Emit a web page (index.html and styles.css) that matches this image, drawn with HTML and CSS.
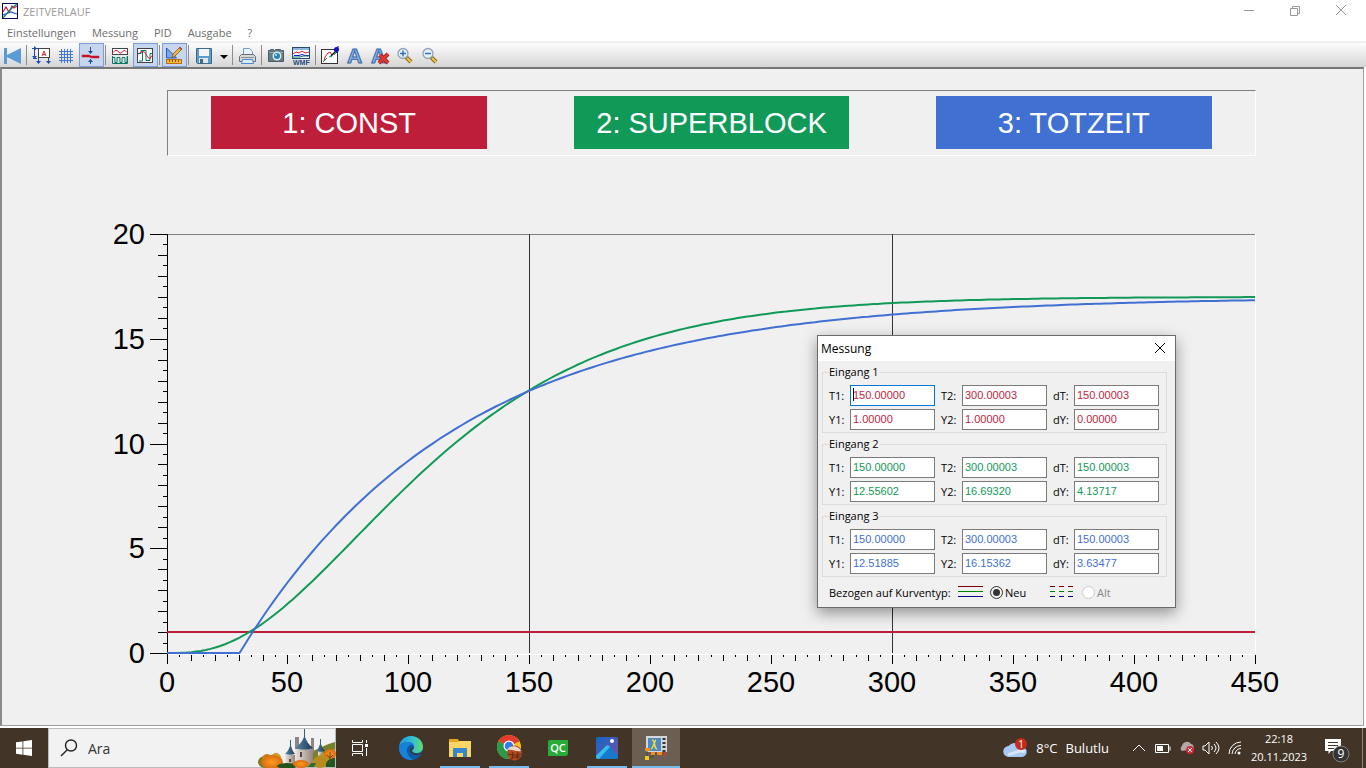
FILE: index.html
```html
<!DOCTYPE html>
<html lang="de">

<head>
    <meta charset="UTF-8">
    <meta name="viewport" content="width=device-width, initial-scale=1.0">
    <title>ZEITVERLAUF</title>
    <link rel="stylesheet" href="styles.css">
</head>

<body>
    <header class="titlebar">
        <svg class="app-icon" width="16" height="16" viewBox="0 0 16 16">
            <rect x="0.5" y="0.5" width="15" height="15" fill="#fff" stroke="#0a0a50"/>
            <path d="M1 9l3-5 3 5 3-6 2 2 3-2" fill="none" stroke="#d81838" stroke-width="1.2"/>
            <path d="M1 12l5-2 3-1 3 1 3 1" fill="none" stroke="#2848c8" stroke-width="1.2"/>
            <path d="M1 15l6-7 4-4 4-3" fill="none" stroke="#108878" stroke-width="1.2"/>
        </svg>
        <h1>ZEITVERLAUF</h1>
        <div class="window-buttons">
            <button aria-label="Minimieren"><svg width="12" height="12"><path d="M1 5.5h10"/></svg></button>
            <button aria-label="Wiederherstellen"><svg width="12" height="12"><path d="M1.5 3.5h7v7h-7zM3.5 3.5v-2h7v7h-2"/></svg></button>
            <button aria-label="Schließen"><svg width="12" height="12"><path d="M1 0l10 10M11 0L1 10"/></svg></button>
        </div>
    </header>

    <nav class="menu">
        <a href="#">Einstellungen</a>
        <a href="#">Messung</a>
        <a href="#">PID</a>
        <a href="#">Ausgabe</a>
        <a href="#">?</a>
    </nav>

    <div class="toolbar">
        <button aria-label="Anfang">
            <svg viewBox="0 0 25 24"><path d="M4 5h3v7l14-7v16L7 14v7H4z" fill="#5a9bd5"/></svg>
        </button>
        <span class="sep"></span>
        <button aria-label="Achsen">
            <svg viewBox="0 0 25 24" fill="none">
                <rect x="9.5" y="5.5" width="11" height="9" fill="#fff" stroke="#444"/>
                <path d="M13 13l2-5 2 5M13.5 11.500h3" stroke="#d83028"/>
                <path d="M3 5.500h6M4 15.500h4M9.500 15v5M19.500 15v5M5.500 7v7" stroke="#1c4faa"/>
                <path d="M5 3l3 2.500-3 2.500zM3 13h5l-2.500 3zM7 18h5l-2.500 3zM17 18h5l-2.500 3z" fill="#1c4faa"/>
            </svg>
        </button>
        <button aria-label="Gitter">
            <svg viewBox="0 0 25 24"><path d="M7.500 6v14M10.500 6v14M13.500 6v14M16.500 6v14M5 8.500h14M5 11.500h14M5 14.500h14M5 17.500h14" stroke="#4478c8"/></svg>
        </button>
        <button class="active" aria-label="Messlinie">
            <svg viewBox="0 0 25 24">
                <path d="M3 12h7l2 1h8v2h-7l-3-1H3z" fill="#c81028" stroke="#c81028" stroke-width="0.5"/>
                <path d="M11.500 4v6M11.500 16v5" stroke="#1c4faa"/>
                <path d="M9 8h5l-2.500 3zM9 19h5l-2.500-3z" fill="#1c4faa"/>
            </svg>
        </button>
        <span class="sep"></span>
        <button aria-label="Getrennt">
            <svg viewBox="0 0 25 24" fill="none">
                <rect x="4.500" y="5.500" width="15" height="6" fill="#fff" stroke="#444"/>
                <path d="M5 9.500l2-2h2l3 2.500h1l3-2.500h1l2 2" stroke="#d81838"/>
                <path d="M4 14.500h3v5h2v-5h3v5h2v-5h3v5h2v-6" stroke="#087868" fill="#fff"/>
                <path d="M4.500 13v7.500h15V13" stroke="#087868"/>
            </svg>
        </button>
        <button class="active" aria-label="Gemeinsam">
            <svg viewBox="0 0 25 24" fill="none">
                <rect x="4.500" y="5.500" width="15" height="14" fill="#fff" stroke="#444"/>
                <path d="M5 10.500h3v-3h5v10h4v-7h2" stroke="#087868"/>
                <path d="M9.500 8v10H6" stroke="#087868"/>
                <path d="M5 11.500l2-2 3-1 2 1 3 5 2 1 2-3" stroke="#d81838"/>
            </svg>
        </button>
        <span class="sep"></span>
        <button class="active" aria-label="Zeichnen">
            <svg viewBox="0 0 25 24">
                <path d="M4.500 5v10h10z" fill="#78a8e8" stroke="#2858b0"/>
                <path d="M10 15l1-4 7-7 2 2-7 7z" fill="#f0b840" stroke="#805020" stroke-width="0.8"/>
                <path d="M17 5l2 2 1-1-2-2z" fill="#b04040"/>
                <rect x="4.500" y="16.500" width="15" height="4" fill="#f8b838" stroke="#b87010"/>
                <path d="M7.500 17v2M10.500 17v2M13.500 17v2M16.500 17v2" stroke="#805020"/>
            </svg>
        </button>
        <span class="sep"></span>
        <button aria-label="Speichern">
            <svg viewBox="0 0 25 24">
                <path d="M5.500 5.500h15v15h-14l-1-1z" fill="#5a9bd0" stroke="#3c6c8c"/>
                <path d="M8 6h10v7H8z" fill="#f4f4f4"/>
                <path d="M8 15h9v5H8z" fill="#e4e4e4"/>
                <path d="M9 16h3v4H9z" fill="#3c6c8c"/>
            </svg>
        </button>
        <button class="narrow" aria-label="Speicheroptionen">
            <svg viewBox="0 0 15 24"><path d="M4 12h8l-4 4z" fill="#000"/></svg>
        </button>
        <span class="sep"></span>
        <button aria-label="Drucken">
            <svg viewBox="0 0 25 24">
                <path d="M8.500 12V5.500h6l3 3V12" fill="#eaf3fc" stroke="#6f9fd0"/>
                <path d="M6.500 11.500h12l2 2v5h-16v-5z" fill="#d4d8dd" stroke="#666c78"/>
                <path d="M6 14.500h13" stroke="#8a919c"/>
                <path d="M7.500 16.500h10l1 4h-12z" fill="#d8ecfc" stroke="#5088c8"/>
            </svg>
        </button>
        <span class="sep"></span>
        <button aria-label="Kamera">
            <svg viewBox="0 0 25 24">
                <path d="M4.500 7.500h2v-1h3v1h1l1-1h5l1 1h2v11h-15z" fill="#647c84" stroke="#4b5e66"/>
                <path d="M5 9.500h14" stroke="#93a8ae"/>
                <circle cx="13" cy="13" r="4.500" fill="#dce8ee"/>
                <circle cx="13" cy="13" r="3" fill="#2884b0"/>
                <circle cx="12" cy="12" r="1" fill="#b8e8ff"/>
            </svg>
        </button>
        <button aria-label="WMF">
            <svg viewBox="0 0 25 24" fill="none">
                <rect x="3.500" y="4.500" width="17" height="11" fill="#fff" stroke="#284878"/>
                <path d="M4 6h16" stroke="#8fb5df" stroke-width="2"/>
                <path d="M4 11l3-2 3 1 3-2 3 2 4-1" stroke="#d81838"/>
                <path d="M5 12.500h5l3-1 3 1h4" stroke="#1818c8"/>
                <path d="M4 14h7l3-1h6" stroke="#087868"/>
                <text x="4" y="22" class="wmf">WMF</text>
            </svg>
        </button>
        <span class="sep"></span>
        <button aria-label="Kurve bearbeiten">
            <svg viewBox="0 0 25 24" fill="none">
                <rect x="3.500" y="6.500" width="16" height="14" fill="#fff" stroke="#333"/>
                <path d="M6 18l1-4 3-4 2-1 2 3" stroke="#d81838"/>
                <path d="M5 19l4-4M11 14l3-1M16 12l2-2" stroke="#109858"/>
                <path d="M13 13l5-5" stroke="#111" stroke-width="1.5"/>
                <circle cx="18.500" cy="6.500" r="2.500" fill="#1010c0"/>
                <path d="M15 6l4 4M19 4h2" stroke="#1010c0"/>
            </svg>
        </button>
        <button aria-label="Text">
            <svg viewBox="0 0 25 24"><text x="4" y="20" class="letter">A</text></svg>
        </button>
        <button aria-label="Text löschen">
            <svg viewBox="0 0 25 24">
                <text x="3" y="20" class="letter">A</text>
                <path d="M12 12l8 8M20 11l-9 9" stroke="#a01818" stroke-width="4"/>
                <path d="M12 12l8 8M20 11l-9 9" stroke="#e03830" stroke-width="2.5"/>
            </svg>
        </button>
        <button aria-label="Vergrößern">
            <svg viewBox="0 0 25 24">
                <path d="M13 14l5 5" stroke="#8a6818" stroke-width="4"/>
                <path d="M14 15l4 4" stroke="#f0c850" stroke-width="2"/>
                <circle cx="10" cy="10.500" r="5" fill="#e4effa" stroke="#94a2b4" stroke-width="1.3"/>
                <path d="M7 10.500h6M10 7.500v6" stroke="#3870c0" stroke-width="1.5"/>
            </svg>
        </button>
        <button aria-label="Verkleinern">
            <svg viewBox="0 0 25 24">
                <path d="M13 14l5 5" stroke="#8a6818" stroke-width="4"/>
                <path d="M14 15l4 4" stroke="#f0c850" stroke-width="2"/>
                <circle cx="10" cy="10.500" r="5" fill="#e4effa" stroke="#94a2b4" stroke-width="1.3"/>
                <path d="M7 10.500h6" stroke="#3870c0" stroke-width="1.5"/>
            </svg>
        </button>
    </div>

    <main class="workspace">
        <div class="legend-box">
            <div class="signal"><span class="red">1: CONST</span></div>
            <div class="signal"><span class="green">2: SUPERBLOCK</span></div>
            <div class="signal"><span class="blue">3: TOTZEIT</span></div>
        </div>
        <div class="chart-box">
            <svg id="chart" width="100%" height="100%"></svg>
        </div>

        <section class="dialog" aria-label="Messung">
            <div class="dialog-title">
                <h2>Messung</h2>
                <button aria-label="Schließen"><svg width="12" height="12"><path d="M1 1l10 10M11 1L1 11"/></svg></button>
            </div>
            <form class="dialog-body">
                <fieldset class="input-red">
                    <legend>Eingang 1</legend>
                    <div class="values">
                        <label>T1: <span class="focused"><input type="text" value="150.00000"></span></label>
                        <label>T2: <span><input type="text" value="300.00003"></span></label>
                        <label>dT: <span><input type="text" value="150.00003"></span></label>
                        <label>Y1: <span><input type="text" value="1.00000"></span></label>
                        <label>Y2: <span><input type="text" value="1.00000"></span></label>
                        <label>dY: <span><input type="text" value="0.00000"></span></label>
                    </div>
                </fieldset>
                <fieldset class="input-green">
                    <legend>Eingang 2</legend>
                    <div class="values">
                        <label>T1: <span><input type="text" value="150.00000"></span></label>
                        <label>T2: <span><input type="text" value="300.00003"></span></label>
                        <label>dT: <span><input type="text" value="150.00003"></span></label>
                        <label>Y1: <span><input type="text" value="12.55602"></span></label>
                        <label>Y2: <span><input type="text" value="16.69320"></span></label>
                        <label>dY: <span><input type="text" value="4.13717"></span></label>
                    </div>
                </fieldset>
                <fieldset class="input-blue">
                    <legend>Eingang 3</legend>
                    <div class="values">
                        <label>T1: <span><input type="text" value="150.00000"></span></label>
                        <label>T2: <span><input type="text" value="300.00003"></span></label>
                        <label>dT: <span><input type="text" value="150.00003"></span></label>
                        <label>Y1: <span><input type="text" value="12.51885"></span></label>
                        <label>Y2: <span><input type="text" value="16.15362"></span></label>
                        <label>dY: <span><input type="text" value="3.63477"></span></label>
                    </div>
                </fieldset>
                <div class="curve-type">
                    <span class="curve-caption">Bezogen auf Kurventyp:</span>
                    <label>
                        <svg class="lines" width="25" height="12"><path d="M0 .5h25" stroke="#800000"/><path d="M0 5.500h25" stroke="#008000"/><path d="M0 10.500h25" stroke="#000080"/></svg>
                        <input type="radio" name="typ" checked>Neu
                    </label>
                    <label class="disabled">
                        <svg class="lines" width="25" height="12" stroke-dasharray="5 4"><path d="M0 .5h23" stroke="#800000"/><path d="M0 5.500h23" stroke="#008000"/><path d="M0 10.500h23" stroke="#000080"/></svg>
                        <input type="radio" name="typ" disabled>Alt
                    </label>
                </div>
            </form>
        </section>
    </main>

    <footer class="taskbar">
        <button class="task" aria-label="Start">
            <svg width="16" height="16"><path d="M0 2.300L6.500 1.400v6.300H0zM7.300 1.200L16 0v7.700H7.300zM0 8.500h6.500v6.200L0 13.800zM7.300 8.500H16V16l-8.700-1.200z" fill="#fff"/></svg>
        </button>
        <div class="search">
            <svg width="18" height="18" fill="none" stroke="#222" stroke-width="1.4"><circle cx="10" cy="6.500" r="5.500"/><path d="M6 11l-6 6"/></svg>
            <input type="text" placeholder="Ara" aria-label="Ara">
            <svg class="castle" width="77" height="38" viewBox="0 0 77 38">
                <defs>
                    <linearGradient id="roof"><stop offset="0" stop-color="#5a87a5"/><stop offset="1" stop-color="#183a58"/></linearGradient>
                    <linearGradient id="wall"><stop offset="0" stop-color="#eee5e0"/><stop offset="1" stop-color="#96837e"/></linearGradient>
                    <radialGradient id="tree"><stop offset="0" stop-color="#ff9a1e"/><stop offset="1" stop-color="#d86c10"/></radialGradient>
                </defs>
                <path d="M38 38c2-10 10-14 17-16 6-2 13-7 22-9v25z" fill="#75822a"/>
                <path d="M37 8h4v20h-4zM53 9h3v15h-3z" fill="#8d8582"/>
                <path d="M37 20h18v17H37z" fill="url(#wall)"/>
                <path d="M27 26h10v10H27z" fill="url(#wall)"/>
                <path d="M60 22h5v6h-5z" fill="url(#wall)"/>
                <path d="M46 0h1v8c2 5 4 8 8 11-5 2-14 2-18 0 4-3 7-6 9-11z" fill="url(#roof)"/>
                <path d="M32 11h1v6c1 3 2 6 4 8-3 1-7 1-10 0 3-3 4-5 5-8z" fill="url(#roof)"/>
                <path d="M62 10h1v5c1 3 2 5 4 7-3 1-6 1-9 0 2-2 3-4 4-7z" fill="url(#roof)"/>
                <path d="M42 23h2v5h-2zM31 30h2v3h-2z" fill="#56443d"/>
                <path d="M52 38c2-9 10-14 25-18v18z" fill="#b09a28"/>
                <ellipse cx="7" cy="33" rx="7" ry="6" fill="#7c7b22"/>
                <circle cx="9" cy="30" r="5" fill="#c58222"/><circle cx="18" cy="29" r="5" fill="#d59c22"/>
                <ellipse cx="14" cy="33" rx="11" ry="7" fill="url(#tree)"/>
                <ellipse cx="29" cy="37" rx="10" ry="3" fill="#24541c"/>
                <ellipse cx="43" cy="35" rx="8" ry="4" fill="url(#tree)"/>
                <ellipse cx="62" cy="33" rx="7" ry="6" fill="#b88b20"/>
                <path d="M68 38c-1-5 3-9 9-9v9z" fill="#1c5920"/>
                <ellipse cx="72" cy="25" rx="6" ry="5" fill="url(#tree)"/>
                <path d="M72 23v13M69 26l3 3 3-3" fill="none" stroke="#71451a"/>
                <path d="M50 38l3-4h5l-2 4z" fill="#277027"/>
            </svg>
        </div>
        <button class="task" aria-label="Aufgabenansicht">
            <svg width="17" height="16" fill="none" stroke="#fff"><path d="M.5 0v2.500h10V0M.5 16v-2.500h10V16M.5 4.500h10v7H.5zM14.500 0v3M14.500 8v8"/><path d="M13 4h3v3h-3z" fill="#fff" stroke="none"/></svg>
        </button>
        <div class="apps">
            <button class="task" aria-label="Edge">
                <svg width="24" height="24" viewBox="0 0 24 24">
                    <defs><linearGradient id="edge"><stop offset="0" stop-color="#2395dc"/><stop offset="0.6" stop-color="#35c1d2"/><stop offset="1" stop-color="#67dc60"/></linearGradient></defs>
                    <circle cx="12" cy="12" r="12" fill="#0c5ba8"/>
                    <path d="M0 12C0 5 5 0 12 0c7 0 12 5 12 11 0 4-3 6-7 6-2 0-4-1-4-2 0-1 2-1 2-4 0-3-3-5-6-5-5 0-9 3-9 6z" fill="url(#edge)"/>
                    <path d="M0 12C1 8 5 6 9 6c3 0 5 1 6 3-4-2-8 2-7 7 1 4 4 7 7 7.500C7 25.500 0 20 0 12z" fill="#1683d8"/>
                    <path d="M13 15c1 3 6 4 11 1v1c-5 3-12 3-13-2 0-3 2-4 4-4 0 2-3 2-2 4z" fill="#423426"/>
                </svg>
            </button>
            <button class="task open" aria-label="Explorer">
                <svg width="22" height="20" viewBox="0 0 22 20">
                    <path d="M0 1h9l1 2h11v15H0z" fill="#e6a51c"/><path d="M0 4h9l1-1h12v16H0z" fill="#fbd667"/>
                    <path d="M4 19v-8q0-1 1-1h12q1 0 1 1v8h-4v-4H8v4z" fill="#3887ce"/>
                </svg>
            </button>
            <button class="task open" aria-label="Chrome">
                <svg width="26" height="26" viewBox="0 0 26 26">
                    <circle cx="13" cy="12" r="12" fill="#fbc116"/>
                    <path d="M13 12L2.600 6A12 12 0 0 1 23.400 6z" fill="#e33b2e"/>
                    <path d="M13 12L2.600 6A12 12 0 0 0 13 24l5-9z" fill="#279b4a"/>
                    <path d="M3 6h20v1H13z" fill="#e33b2e"/>
                    <circle cx="13" cy="11" r="5.500" fill="#fff"/><circle cx="13" cy="11" r="4.300" fill="#3479e8"/>
                    <circle cx="18.500" cy="18" r="7.500" fill="#b04a20"/>
                    <path d="M12 20c3-2 8 2 13-1M15 24c3-3 6-2 9-2M17 17l-1 7M22 17l-1 7" fill="none" stroke="#602711"/>
                    <path d="M11 15c3-6 12-4 14 1-4 1-9-2-14-1z" fill="#ead8cb"/>
                </svg>
            </button>
            <button class="task" aria-label="QC">
                <svg width="20" height="16"><path d="M2 0h18v13q0 3-3 3H0V2q0-2 2-2z" fill="#27ac3a"/><text x="10" y="12" class="qc">QC</text></svg>
            </button>
            <button class="task open" aria-label="Fotos">
                <svg width="22" height="22" viewBox="0 0 22 22">
                    <defs>
                        <linearGradient id="sky" x2="1" y2="1"><stop offset="0" stop-color="#1068c8"/><stop offset="1" stop-color="#7a4fa4"/></linearGradient>
                        <linearGradient id="hill" x2="1" y2="1"><stop offset="0" stop-color="#48e0fa"/><stop offset="1" stop-color="#1e98e0"/></linearGradient>
                    </defs>
                    <rect width="22" height="22" rx="2" fill="url(#sky)"/>
                    <circle cx="16" cy="4" r="2" fill="#fff"/>
                    <path d="M11 9q1-1 2 0l9 9v2q0 2-2 2H2z" fill="#1878cc"/>
                    <path d="M0 19L10 9q2-2 4 1L3 22H2q-2 0-2-2z" fill="url(#hill)"/>
                </svg>
            </button>
            <button class="task open current" aria-label="Zeitverlauf">
                <svg width="24" height="24" viewBox="0 0 24 24">
                    <rect x="2" y="0" width="21" height="16" fill="#d6d6d6"/><rect x="4" y="2" width="13" height="13" fill="#4d8ac4"/>
                    <path d="M8 4c3-1 2 9 5 9M12 4c-1 0-3 9-5 9" fill="none" stroke="#f4da3b" stroke-width="1.5"/>
                    <path d="M20 2v14" stroke="#333" stroke-width="3" stroke-dasharray="2 2"/>
                    <path d="M3 14v7h6v-3h10" fill="none" stroke="#444"/>
                    <path d="M1 12h5v3H1zM7 16h4v3H7zM13 16h5v3h-5z" fill="#f08c20"/><path d="M1 20h4v4H1z" fill="#f3cb18"/><path d="M20 16h2v4h-2z" fill="#d93622"/>
                </svg>
            </button>
        </div>
        <div class="tray">
            <a href="#" class="weather">
                <svg width="25" height="25" viewBox="0 0 25 25">
                    <path d="M6 21a5.500 5.500 0 0 1-.5-11 8 8 0 0 1 13 1 5 5 0 0 1 .5 10z" fill="#a9c8f5"/>
                    <path d="M5 18c3 2 11-6 17-2" fill="none" stroke="#d8e8ff" stroke-width="3"/>
                    <circle cx="18" cy="8" r="6" fill="#c42b1c"/><text x="18" y="12" class="badge-text">1</text>
                </svg>
                <span>8°C</span><span>Bulutlu</span>
            </a>
            <button aria-label="Ausgeblendete Symbole"><svg width="14" height="8"><path d="M1 7l6-6 6 6"/></svg></button>
            <button aria-label="Akku"><svg width="16" height="9"><path d="M.5.5h13v8H.5zM15 2.500v4"/><path d="M2 2h6v5H2z" fill="#fff" stroke="none"/></svg></button>
            <button aria-label="OneDrive">
                <svg width="16" height="14"><path d="M3 10a3 3 0 0 1 0-5 5 5 0 0 1 9-2 3 3 0 0 1 2 5z" fill="#b0aaa5" stroke="none"/><circle cx="11" cy="9" r="4" fill="#d62836" stroke="none"/><path d="M9 7l4 4M13 7l-4 4"/></svg>
            </button>
            <button aria-label="Lautstärke"><svg width="18" height="14"><path d="M1 5h2l4-4v12L3 9H1zM9.500 5q2 2 0 4M12 3q4 4 0 8M14 1q6 6 0 12"/></svg></button>
            <button aria-label="WLAN"><svg width="14" height="14"><path d="M1 13A12 12 0 0 1 13 1M4 13a9 9 0 0 1 9-8.500M7 13a6 6 0 0 1 6-5.500"/><circle cx="11" cy="12" r="1.500" fill="#fff" stroke="none"/></svg></button>
            <time class="clock"><span>22:18</span><span>20.11.2023</span></time>
            <button class="notes" aria-label="Benachrichtigungen">
                <svg width="26" height="24">
                    <path d="M1 0h16v12H7l-2.500 3V12H1z" fill="#fff" stroke="none"/><path d="M4 3.500h10M4 6.500h10M4 9.500h6" stroke="#423426"/>
                    <circle cx="17" cy="15" r="8" fill="#343434" stroke="#808080"/><text x="17" y="19" class="badge-text count">9</text>
                </svg>
            </button>
        </div>
    </footer>

    <script>
        const chart = document.getElementById('chart');
        const tMax = 450;
        const yMax = 20;
        // space around the plot area for the axis labels
        const pad = { left: 165, right: 108, top: 78, bottom: 72 };

        function line(x1, y1, x2, y2, cls) {
            return `<line x1="${x1}" y1="${y1}" x2="${x2}" y2="${y2}" class="${cls}"/>`;
        }

        // dead time 30 s, then first order lag
        function totzeit(t) {
            return t < 30 ? 0 : 17 * (1 - Math.exp(-(t - 30) / 90));
        }

        // three equal lags in a row
        function superblock(t) {
            const x = t / 39;
            return 17 * (1 - Math.exp(-x) * (1 + x + x * x / 2));
        }

        function drawChart() {
            const width = chart.clientWidth;
            const height = chart.clientHeight;
            const right = width - pad.right;
            const bottom = height - pad.bottom;
            const px = t => Math.floor(pad.left + t / tMax * (right - pad.left));
            const py = y => Math.round(bottom - y / yMax * (bottom - pad.top));
            let out = '';

            out += line(pad.left, pad.top, right, pad.top, 'edge-dark');
            out += line(right, pad.top, right, bottom, 'edge-light');
            out += line(pad.left, bottom + 1, right, bottom + 1, 'edge-light');
            out += line(pad.left, pad.top, pad.left, bottom + 10, 'axis');

            for (let t = 0; t <= tMax; t += 5) {
                const len = t % 50 === 0 ? 9 : t % 10 === 0 ? 6 : 2;
                out += line(px(t), bottom + 2, px(t), bottom + 2 + len, 'axis');
                if (t % 50 === 0) {
                    out += `<text x="${px(t)}" y="${bottom + 39}" class="label-x">${t}</text>`;
                }
            }
            for (let i = 0; i <= yMax * 2; i++) {
                const y = py(i / 2);
                const len = i % 10 === 0 ? 17 : i % 2 === 0 ? 9 : 4;
                out += line(pad.left - len, y, pad.left, y, 'axis');
                if (i % 10 === 0) {
                    out += `<text x="${pad.left - 22}" y="${y + 10}" class="label-y">${i / 2}</text>`;
                }
            }

            out += line(px(150), pad.top, px(150), bottom, 'cursor');
            out += line(px(300), pad.top, px(300), bottom, 'cursor');

            const curves = [[() => 1, 'red'], [superblock, 'green'], [totzeit, 'blue']];
            curves.forEach(([f, name]) => {
                let points = '';
                for (let t = 0; t <= tMax; t += 2) {
                    const x = pad.left + t / tMax * (right - pad.left);
                    const y = bottom - f(t) / yMax * (bottom - pad.top);
                    points += `${x.toFixed(1)},${y.toFixed(1)} `;
                }
                out += `<polyline points="${points}" class="curve ${name}"/>`;
            });
            chart.innerHTML = out;
        }

        drawChart();
        window.addEventListener('resize', drawChart);
    </script>
</body>
</html>
```
FILE: styles.css
```css
* {
    box-sizing: border-box;
}

body {
    display: flex;
    flex-direction: column;
    min-height: 100vh;
    margin: 0;
    background-color: #fff;
    font-family: "Open Sans", "Noto Sans", sans-serif;
    font-size: 12px;
    overflow: hidden;
}

button {
    display: flex;
    align-items: center;
    justify-content: center;
    padding: 0;
    border: none;
    background: none;
    font: inherit;
}

svg {
    display: block;
    flex: none;
    overflow: visible;
}

a {
    color: inherit;
    text-decoration: none;
}

/* title and menu */

.titlebar {
    display: flex;
    align-items: center;
    height: 22px;
    padding-left: 2px;
}

.titlebar h1 {
    margin: 0 0 0 5px;
    font-size: 11px;
    font-weight: normal;
    color: #999;
}

.window-buttons {
    display: flex;
    margin-left: auto;
    margin-right: 2px;
}

.window-buttons button {
    width: 46px;
    height: 22px;
}

.window-buttons path {
    fill: none;
    stroke: #999;
}

.menu {
    display: flex;
    gap: 16px;
    height: 21px;
    padding-left: 7px;
    border-bottom: 2px solid #f0f0f0;
    line-height: 22px;
    font-size: 11px;
    color: #6d6d6d;
}

/* toolbar */

.toolbar {
    display: flex;
    height: 24px;
    background: linear-gradient(#fdfdfd, #d5d5d5);
}

.toolbar button {
    width: 25px;
    height: 24px;
}

.toolbar button.narrow {
    width: 15px;
}

.toolbar button.active {
    border: 1px solid #7d9fd9;
    background-color: #c8d5ee;
}

.toolbar svg {
    width: 25px;
    height: 24px;
}

.toolbar .narrow svg {
    width: 15px;
}

.sep {
    width: 4px;
    padding: 2px 2px 2px 1px;
    background: #8c8c8c content-box;
}

.wmf {
    font: bold 7px "Liberation Sans", sans-serif;
    fill: #284878;
}

.letter {
    font: bold 21px "Liberation Sans", sans-serif;
    fill: #8ab4e8;
    stroke: #3868a8;
}

/* plot window */

.workspace {
    position: relative;
    display: flex;
    flex-direction: column;
    flex: 1;
    margin-right: 2px;
    margin-bottom: 2px;
    border: solid #a0a0a0;
    border-width: 2px 1px 1px 2px;
    border-top-color: #777;
    border-left-color: #8a8a8a;
    background-color: #f0f0f0;
}

.legend-box {
    display: flex;
    height: 66px;
    margin: 21px 107px 0 165px;
    border: 1px solid #808080;
    border-right-color: #fff;
    border-bottom-color: #fff;
}

.signal {
    display: flex;
    flex: 1;
    justify-content: center;
    padding-top: 5px;
}

.signal span {
    width: 76%;
    height: 53px;
    text-align: center;
    font-family: "Liberation Sans", sans-serif;
    font-size: 29px;
    line-height: 54px;
    color: #fff;
}

.signal .red {
    background-color: #bf1e3b;
}

.signal .green {
    background-color: #119958;
}

.signal .blue {
    background-color: #4070d2;
}

.chart-box {
    flex: 1;
    min-height: 400px;
    position: relative;
}

#chart {
    position: absolute;
    inset: 0;
}

#chart line {
    shape-rendering: crispEdges;
}

.axis {
    stroke: #000;
}

.cursor {
    stroke: #333;
}

.edge-dark {
    stroke: #808080;
}

.edge-light {
    stroke: #fff;
}

.curve {
    fill: none;
    stroke-width: 2;
}

.curve.red {
    stroke: #bf1e3b;
}

.curve.green {
    stroke: #119958;
}

.curve.blue {
    stroke: #4070d2;
}

.label-x,
.label-y {
    font-family: "Liberation Sans", sans-serif;
    font-size: 29px;
    text-anchor: middle;
}

.label-y {
    text-anchor: end;
}

/* measuring dialog */

.dialog {
    position: absolute;
    left: 815px;
    top: 266px;
    width: 359px;
    border: 1px solid #6b6b6b;
    background-color: #f0f0f0;
    box-shadow: 0 5px 14px rgba(0, 0, 0, 0.4);
    font-size: 11px;
    color: #000;
}

.dialog-title {
    display: flex;
    align-items: center;
    justify-content: space-between;
    height: 25px;
    padding: 0 9px 1px 3px;
    background-color: #fff;
}

.dialog-title h2 {
    margin: 0;
    font-size: 12px;
    font-weight: normal;
}

.dialog-title path {
    stroke: #000;
}

.dialog-body {
    padding: 4px 8px 0 4px;
}

fieldset {
    min-width: 0;
    margin: 0 0 4px;
    padding: 6px 6px 2px;
    border: 1px solid #dcdcdc;
}

fieldset:last-of-type {
    margin-bottom: 0;
}

legend {
    padding: 0;
    line-height: 14px;
}

.values {
    display: grid;
    grid-template-columns: repeat(3, 106px);
    gap: 3px 6px;
}

.values label {
    display: flex;
    align-items: center;
    justify-content: space-between;
    line-height: 21px;
}

.values span {
    position: relative;
    width: 85px;
    height: 21px;
}

.values input {
    display: block;
    width: 100%;
    height: 100%;
    padding: 0 2px 2px;
    border: 1px solid #7a7a7a;
    background-color: #fff;
    font-family: "Liberation Sans", sans-serif;
    font-size: 11px;
}

.values .focused input {
    border-color: #0078d7;
}

/* text caret */
.focused::after {
    content: "";
    position: absolute;
    left: 3px;
    top: 3px;
    width: 1px;
    height: 13px;
    background-color: #000;
}

.input-red input {
    color: #bf1e3b;
}

.input-green input {
    color: #119958;
}

.input-blue input {
    color: #4070d2;
}

.curve-type {
    display: flex;
    align-items: center;
    height: 30px;
    padding-left: 7px;
}

.curve-caption {
    width: 129px;
    white-space: nowrap;
}

.curve-type label {
    display: flex;
    align-items: center;
    width: 92px;
}

.lines {
    shape-rendering: crispEdges;
}

.curve-type .disabled {
    color: #888;
}

.curve-type input {
    appearance: none;
    flex: none;
    width: 13px;
    height: 13px;
    margin: 0 2px 0 7px;
    border: 1px solid #333;
    border-radius: 50%;
    background-color: #fff;
}

.curve-type input:checked {
    padding: 2px;
    background: #333 content-box;
}

.curve-type input:disabled {
    border-color: #ccc;
}

/* taskbar */

.taskbar {
    display: flex;
    height: 40px;
    background-color: #423426;
    color: #fff;
}

.task {
    width: 48px;
    height: 40px;
}

.search {
    display: flex;
    align-items: center;
    width: 288px;
    padding-left: 12px;
    border: 1px solid #bbb;
    background-color: #f2f2f2;
}

.search input {
    flex: 1;
    min-width: 0;
    padding: 0 0 0 9px;
    border: none;
    background: none;
    font: 14px "Open Sans", sans-serif;
}

.search input::placeholder {
    color: #333;
}

.castle {
    align-self: flex-end;
}

.apps {
    display: flex;
    gap: 1px;
    margin-left: 3px;
}

.open {
    background: linear-gradient(#76b9ed, #76b9ed) center bottom / 40px 2px no-repeat;
}

.open.current {
    background-size: 48px 2px;
    background-color: #6b5f54;
}

.qc {
    font: 600 11px "Open Sans", sans-serif;
    text-anchor: middle;
    fill: #fff;
}

.tray {
    display: flex;
    align-items: center;
    margin-left: auto;
    margin-right: 3px;
    border-right: 1px solid #8d857d;
}

.weather {
    display: flex;
    align-items: center;
    gap: 8px;
    margin-right: 18px;
    font-size: 13px;
}

.tray button {
    width: 24px;
    height: 40px;
}

.tray button svg {
    fill: none;
    stroke: #fff;
}

.clock {
    display: flex;
    flex-direction: column;
    align-items: center;
    width: 64px;
    font-size: 11px;
    line-height: 18px;
}

.tray .notes {
    width: 51px;
    padding-top: 5px;
}

.badge-text {
    font: 10px "Open Sans", sans-serif;
    text-anchor: middle;
    fill: #fff;
    stroke: none;
}

.badge-text.count {
    font-size: 12px;
}
```
